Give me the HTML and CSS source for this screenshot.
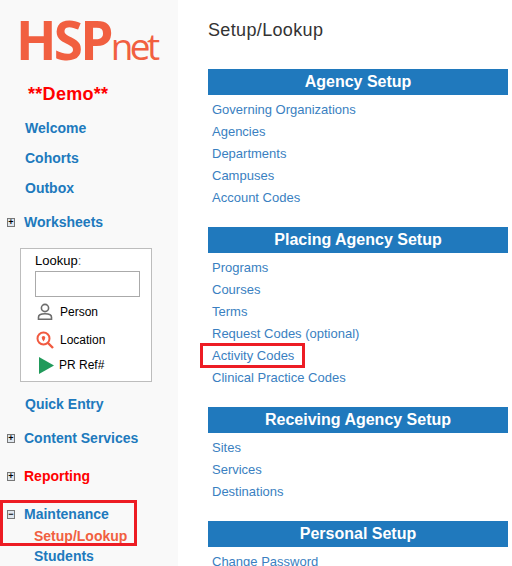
FILE: index.html
```html
<!DOCTYPE html>
<html lang="en">
  <head>
    <meta charset="UTF-8" />
    <title>Setup/Lookup</title>
    <link rel="stylesheet" href="styles.css">
  </head>
  <body>
    <div class="page">
      <div class="sidebar">
        <div class="logo"><span class="logo-hsp">HSP</span><span class="logo-net">net</span></div>
        <div class="demo">**Demo**</div>
        <a class="nav plain">Welcome</a>
        <a class="nav plain">Cohorts</a>
        <a class="nav plain">Outbox</a>
        <div class="nav tree worksheets"><span class="toggle">+</span>Worksheets</div>
        <div class="lookup">
          <div class="lookup-label">Lookup<span class="colon">:</span></div>
          <input class="lookup-input" type="text" />
          <div class="lookup-row person">
            <svg width="18" height="18" viewBox="0 0 18 18" fill="none" stroke="#6d6d6d" stroke-width="1.6">
              <circle cx="9" cy="5" r="3.6" />
              <path d="M2.5 16.2v-2c0-2 2-3.4 6.5-3.4s6.500 1.400 6.500 3.400v2z" />
            </svg>
            <span>Person</span>
          </div>
          <div class="lookup-row location">
            <svg width="18" height="18" viewBox="0 0 18 18" fill="none" stroke="#f15a40" stroke-width="2">
              <circle cx="7.500" cy="7.500" r="6" />
              <path d="M12 12l5 5" stroke-width="2.400" />
              <circle cx="7.500" cy="6.800" r="1.800" fill="#f15a40" stroke="none" />
              <path d="M5.900 7.800L7.500 10.500L9.100 7.800z" fill="#f15a40" stroke="none" />
            </svg>
            <span>Location</span>
          </div>
          <div class="lookup-row ref">
            <svg width="15" height="17" viewBox="0 0 15 17"><path d="M0 0L15 8.500L0 17z" fill="#219a5b" /></svg>
            <span>PR Ref#</span>
          </div>
        </div>
        <a class="nav plain quick">Quick Entry</a>
        <div class="nav tree content-services"><span class="toggle">+</span>Content Services</div>
        <div class="nav tree reporting"><span class="toggle">+</span>Reporting</div>
        <div class="marked-nav">
          <div class="nav tree maintenance"><span class="toggle">−</span>Maintenance</div>
          <a class="subnav current">Setup/Lookup</a>
        </div>
        <a class="subnav">Students</a>
      </div>
      <div class="main">
        <h1 class="title">Setup/Lookup</h1>

        <div class="section">
          <div class="section-head">Agency Setup</div>
          <a class="item">Governing Organizations</a>
          <a class="item">Agencies</a>
          <a class="item">Departments</a>
          <a class="item">Campuses</a>
          <a class="item">Account Codes</a>
        </div>

        <div class="section">
          <div class="section-head">Placing Agency Setup</div>
          <a class="item">Programs</a>
          <a class="item">Courses</a>
          <a class="item">Terms</a>
          <a class="item">Request Codes (optional)</a>
          <a class="item"><span class="marked-item">Activity Codes</span></a>
          <a class="item">Clinical Practice Codes</a>
        </div>

        <div class="section">
          <div class="section-head">Receiving Agency Setup</div>
          <a class="item">Sites</a>
          <a class="item">Services</a>
          <a class="item">Destinations</a>
        </div>

        <div class="section">
          <div class="section-head">Personal Setup</div>
          <a class="item">Change Password</a>
        </div>
      </div>
    </div>
  </body>
</html>
```

FILE: styles.css
```css
html, body {
  margin: 0;
  padding: 0;
  height: 566px;
  overflow: hidden;
  background-color: #ffffff;
  font-family: "Liberation Sans", Arial, sans-serif;
}

.page {
  display: flex;
  height: 566px;
  overflow: hidden;
}

/* left menu */
.sidebar {
  width: 178px;
  flex-shrink: 0;
  background-color: #f9f9f9;
  box-sizing: border-box;
  padding-top: 15px;
}

.logo {
  height: 50px;
  padding-left: 16px;
  line-height: 50px;
  color: #f15f40;
  white-space: nowrap;
}

.logo-hsp {
  font-family: "Open Sans", sans-serif;
  font-weight: 700;
  font-size: 53px;
  letter-spacing: -2.8px;
}

.logo-net {
  font-family: "Open Sans", sans-serif;
  font-size: 37px;
  letter-spacing: -3.5px;
  margin-left: 0;
}

.demo {
  color: #ff0000;
  font-size: 18px;
  font-weight: bold;
  line-height: 22px;
  letter-spacing: 0.3px;
  margin: 18px 0 0 28px;
}

.nav {
  display: block;
  color: #2079bd;
  font-size: 14px;
  font-weight: bold;
  line-height: 18px;
}

.plain {
  padding-left: 25px;
  margin-bottom: 12px;
}

.sidebar .demo + .plain {
  margin-top: 14px;
}

.tree {
  display: flex;
  align-items: center;
}

.toggle {
  width: 6px;
  height: 7px;
  margin: 0 9px 0 7px;
  border: 1px solid #777;
  background-color: #dfe6ee;
  color: #000;
  font-size: 9px;
  font-weight: bold;
  line-height: 7px;
  text-align: center;
}

.worksheets {
  margin-top: 16px;
}

.lookup {
  width: 132px;
  height: 134px;
  margin: 17px 0 0 20px;
  border: 1px solid #bdbdbd;
  background-color: #ffffff;
  box-sizing: border-box;
  padding: 4px 0 0 14px;
  font-size: 12px;
  color: #000;
}

.lookup-label {
  font-size: 13px;
  line-height: 15px;
}

.colon {
  color: #777;
}

.lookup-input {
  display: block;
  width: 105px;
  height: 26px;
  margin: 3px 0 0;
  padding: 0;
  box-sizing: border-box;
  border: 1px solid #aaaaaa;
  background-color: #ffffff;
}

.lookup-row {
  display: flex;
  align-items: center;
  height: 18px;
}

.lookup-row svg {
  flex-shrink: 0;
  margin-left: 1px;
}

.lookup-row span {
  margin-left: 6px;
}

.person {
  margin-top: 6px;
}

.location {
  margin-top: 10px;
}

.ref {
  margin-top: 7px;
}

.ref svg {
  margin-left: 4px;
}

.ref span {
  margin-left: 5px;
}

.quick {
  margin-top: 13px;
  margin-bottom: 0;
}

.content-services {
  margin-top: 16px;
}

.reporting {
  margin-top: 20px;
  color: #ff0000;
}

.marked-nav {
  width: 137px;
  height: 46px;
  margin-top: 15px;
  box-sizing: border-box;
  padding-top: 5px;
  outline: 3px solid #ed1c24;
  outline-offset: -3px;
}

.subnav {
  display: block;
  padding-left: 34px;
  color: #2079bd;
  font-size: 14px;
  font-weight: bold;
  line-height: 18px;
}

.current {
  color: #f15f40;
  margin-top: 4px;
}

.marked-nav + .subnav {
  margin-top: 1px;
}

/* main column */
.main {
  width: 300px;
  margin-left: 30px;
}

.title {
  margin: 19px 0 0;
  color: #333333;
  font-size: 18px;
  font-weight: normal;
  line-height: 22px;
  letter-spacing: 0.35px;
}

.section {
  margin-bottom: 18px;
}

.title + .section {
  margin-top: 28px;
}

.section-head {
  height: 26px;
  margin-bottom: 4px;
  background-color: #2079bd;
  color: #ffffff;
  font-size: 16px;
  font-weight: bold;
  line-height: 26px;
  text-align: center;
}

.item {
  display: block;
  padding-left: 4px;
  color: #3a7fc1;
  font-size: 13px;
  line-height: 22px;
}

.marked-item {
  display: inline-block;
  box-sizing: border-box;
  width: 97px;
  padding-left: 8px;
  margin-left: -8px;
  line-height: 17px;
  outline: 3px solid #ed1c24;
  outline-offset: 1px;
}
```
